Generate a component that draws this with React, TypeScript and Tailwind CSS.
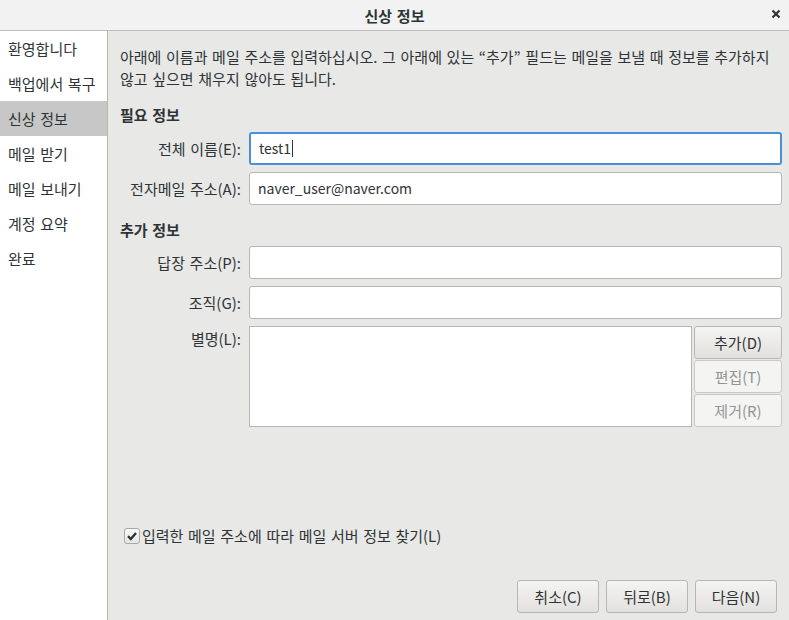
import React from "react";

const steps = ["환영합니다", "백업에서 복구", "신상 정보", "메일 받기", "메일 보내기", "계정 요약", "완료"];

const Field: React.FC<{ label: string; value?: string; focused?: boolean }> = ({ label, value, focused }) => (
  <div className="flex items-center">
    <div className="w-[122px] pr-[1px] text-right">{label}</div>
    <div
      className={
        "ml-[7px] flex h-[33px] flex-1 items-center rounded-[3px] bg-white px-[8px] text-[14px] " +
        (focused ? "border-2 border-[#4a90d9] px-[7px]" : "border border-[#b6b6b3]")
      }
    >
      {value}
      {focused && <span className="ml-[1px] inline-block h-[17px] w-px bg-[#2e3436]" />}
    </div>
  </div>
);

const Btn: React.FC<{ label: string; disabled?: boolean; className?: string }> = ({ label, disabled, className }) => (
  <div
    className={
      "flex items-center justify-center rounded-[3px] border " +
      (disabled
        ? "border-[#cdc7c2] bg-[#f4f4f2] text-[#929595] "
        : "border-[#b6b6b3] bg-gradient-to-b from-[#f4f4f2] to-[#e3e1de] text-[#2e3436] ") +
      (className ?? "")
    }
  >
    {label}
  </div>
);

export default function App() {
  return (
    <div
      className="flex h-[620px] w-[789px] flex-col overflow-hidden bg-[#e8e8e7] text-[15px] leading-[21px] text-[#2e3436] [word-spacing:1.3px]"
      style={{ fontFamily: '"Noto Sans CJK KR", "Noto Sans", sans-serif' }}
    >
      <div className="relative flex h-[31px] shrink-0 items-center justify-center border-b border-[#bdbdbb] bg-[#f2f2f2]">
        <span className="font-bold">신상 정보</span>
        <svg className="absolute right-[8px] top-[9px]" width="10" height="10" viewBox="0 0 10 10">
          <path d="M1.5 1.5 L8.5 8.5 M8.5 1.5 L1.5 8.5" stroke="#2e3436" strokeWidth="2.2" />
        </svg>
      </div>
      <div className="flex flex-1">
        <div className="w-[108px] shrink-0 border-r border-[#b6b6b3] bg-white">
          {steps.map((s, i) => (
            <div key={s} className={"flex h-[35px] items-center pl-[8px] " + (i === 2 ? "bg-[#c6c7c6]" : "")}>
              {s}
            </div>
          ))}
        </div>
        <div className="flex flex-1 flex-col pl-[12px] pr-[7px]">
          <p className="pt-[15px] leading-[22px]">
            아래에 이름과 메일 주소를 입력하십시오. 그 아래에 있는 “추가” 필드는 메일을 보낼 때 정보를 추가하지 않고 싶으면 채우지 않아도 됩니다.
          </p>
          <div className="mt-[14px] font-bold">필요 정보</div>
          <div className="mt-[7px] flex flex-col gap-[7px]">
            <Field label="전체 이름(E):" value="test1" focused />
            <Field label="전자메일 주소(A):" value="naver_user@naver.com" />
          </div>
          <div className="mt-[14px] font-bold">추가 정보</div>
          <div className="mt-[6px] flex flex-col gap-[7px]">
            <Field label="답장 주소(P):" />
            <Field label="조직(G):" />
            <div className="flex">
              <div className="w-[122px] pt-[2px] pr-[1px] text-right">별명(L):</div>
              <div className="ml-[7px] h-[101px] flex-1 border border-[#b6b6b3] bg-white" />
              <div className="ml-[2px] flex w-[88px] flex-col gap-[1px]">
                <Btn label="추가(D)" className="h-[33px]" />
                <Btn label="편집(T)" disabled className="h-[33px]" />
                <Btn label="제거(R)" disabled className="h-[33px]" />
              </div>
            </div>
          </div>
          <div className="mt-[98px] flex items-center pl-[4px]">
            <span className="flex h-[16px] w-[16px] items-center justify-center rounded-[3px] border border-[#a8a8a5] bg-gradient-to-b from-[#fafafa] to-[#e6e5e3]">
              <svg width="12" height="12" viewBox="0 0 12 12">
                <path d="M2 6.2 L4.8 9 L10 3" fill="none" stroke="#2e3436" strokeWidth="2.4" />
              </svg>
            </span>
            <span className="ml-[2px]">입력한 메일 주소에 따라 메일 서버 정보 찾기(L)</span>
          </div>
          <div className="mt-auto mb-[7px] flex justify-end gap-[7px] pr-[5px]">
            <Btn label="취소(C)" className="h-[33px] w-[82px]" />
            <Btn label="뒤로(B)" className="h-[33px] w-[82px]" />
            <Btn label="다음(N)" className="h-[33px] w-[82px]" />
          </div>
        </div>
      </div>
    </div>
  );
}
